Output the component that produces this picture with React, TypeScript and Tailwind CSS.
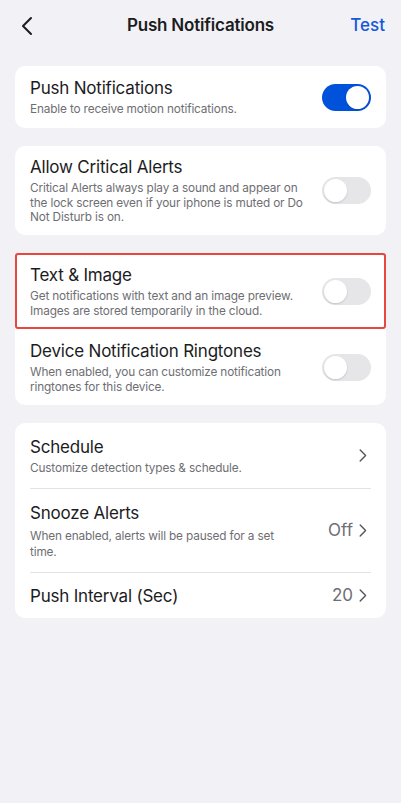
import React from "react";

const Toggle = ({ on }: { on?: boolean }) => (
  <div
    className={
      "w-[49px] h-[27px] rounded-full flex items-center px-[2px] shrink-0 " +
      (on ? "bg-[#0152da] justify-end" : "bg-[#e6e6e8] justify-start")
    }
  >
    <div className="w-[23px] h-[23px] rounded-full bg-white shadow-[0_1px_2px_rgba(0,0,0,0.15)]" />
  </div>
);

const Chevron = () => (
  <svg width="8" height="13" viewBox="0 0 8 13" className="shrink-0 mr-[4px]">
    <path d="M1.2 1 L6.6 6.5 L1.2 12" fill="none" stroke="#55555a" strokeWidth="1.4" strokeLinecap="round" strokeLinejoin="round" />
  </svg>
);

const Title = ({ children }: { children: React.ReactNode }) => (
  <div className="text-[17px] leading-[22px] text-[#1c1c1e] tracking-[-0.2px]">{children}</div>
);

const Sub = ({ children, tall }: { children: React.ReactNode; tall?: boolean }) => (
  <div
    className={
      "text-[11.8px] tracking-[-0.15px] text-[#6e6e73] " +
      (tall ? "mt-[4px] leading-[16px]" : "mt-[3px] leading-[14.5px]")
    }
  >
    {children}
  </div>
);

export default function App() {
  return (
    <div
      className="min-h-[803px] w-full bg-[#f2f2f6] pb-8"
      style={{ fontFamily: "Inter, 'Noto Sans', sans-serif" }}
    >
      <div className="h-[52px] flex items-center justify-between px-[18px] relative">
        <svg width="14" height="20" viewBox="0 0 14 20" className="ml-[2px]">
          <path d="M11 2 L3 10 L11 18" fill="none" stroke="#1c1c1e" strokeWidth="2" strokeLinecap="round" strokeLinejoin="round" />
        </svg>
        <div className="absolute left-0 right-0 text-center text-[17px] font-semibold text-[#1c1c1e] pointer-events-none tracking-[-0.2px]">
          Push Notifications
        </div>
        <div className="text-[17px] font-medium text-[#1658d6] mr-[-2px]">Test</div>
      </div>

      <div className="mt-[14px] px-[15px] flex flex-col gap-[18px]">
        <div className="bg-white rounded-[10px] px-[15px] h-[62px] flex items-center justify-between">
          <div>
            <Title>Push Notifications</Title>
            <Sub>Enable to receive motion notifications.</Sub>
          </div>
          <Toggle on />
        </div>

        <div className="bg-white rounded-[10px] px-[15px] h-[89px] flex items-center justify-between gap-2">
          <div className="w-[284px]">
            <Title>Allow Critical Alerts</Title>
            <Sub>Critical Alerts always play a sound and appear on the lock screen even if your iphone is muted or Do Not Disturb is on.</Sub>
          </div>
          <Toggle />
        </div>

        <div className="bg-white rounded-[10px]">
          <div className="border-2 border-[#e8473d] rounded-[3px] px-[13px] h-[76px] flex items-center justify-between gap-2">
            <div className="w-[284px]">
              <Title>Text &amp; Image</Title>
              <Sub>Get notifications with text and an image preview. Images are stored temporarily in the cloud.</Sub>
            </div>
            <Toggle />
          </div>
          <div className="px-[15px] h-[76px] flex items-center justify-between gap-2">
            <div className="w-[262px]">
              <Title>Device Notification Ringtones</Title>
              <Sub>When enabled, you can customize notification ringtones for this device.</Sub>
            </div>
            <Toggle />
          </div>
        </div>

        <div className="bg-white rounded-[10px] px-[15px]">
          <div className="h-[66px] flex items-center justify-between border-b border-[#e3e3e6]">
            <div>
              <Title>Schedule</Title>
              <Sub>Customize detection types &amp; schedule.</Sub>
            </div>
            <Chevron />
          </div>
          <div className="h-[84px] flex items-center justify-between border-b border-[#e3e3e6]">
            <div className="w-[268px]">
              <Title>Snooze Alerts</Title>
              <Sub tall>When enabled, alerts will be paused for a set time.</Sub>
            </div>
            <div className="flex items-center gap-[6px]">
              <span className="text-[17px] text-[#6e6e73]">Off</span>
              <Chevron />
            </div>
          </div>
          <div className="h-[45px] flex items-center justify-between">
            <Title>Push Interval (Sec)</Title>
            <div className="flex items-center gap-[6px]">
              <span className="text-[17px] text-[#6e6e73]">20</span>
              <Chevron />
            </div>
          </div>
        </div>
      </div>
    </div>
  );
}
